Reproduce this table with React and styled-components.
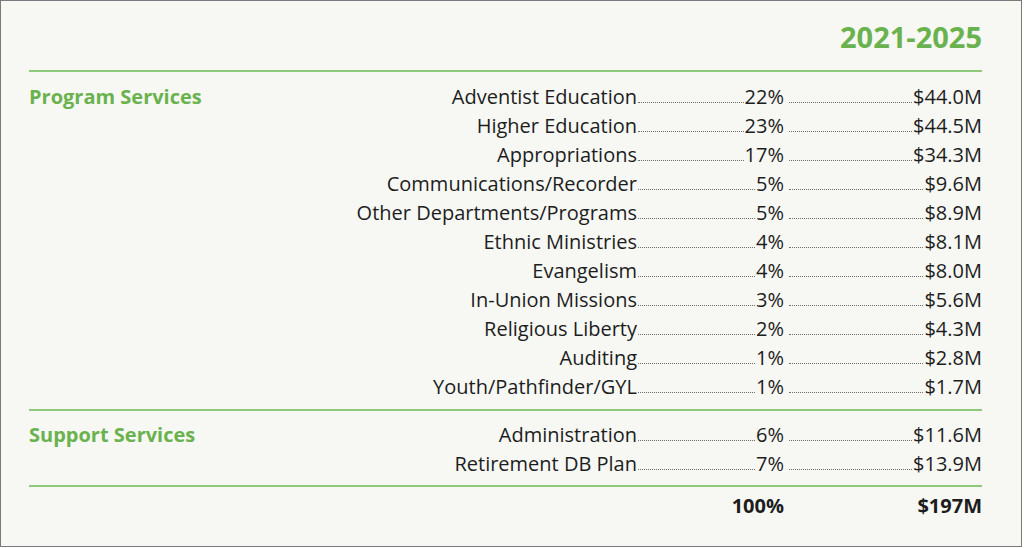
import React from 'react';
import styled, { createGlobalStyle } from 'styled-components';

const GlobalStyle = createGlobalStyle`
    html, body {
        margin: 0;
        padding: 0;
        background: #ffffff;
    }
    body {
        font-family: "Open Sans", "Liberation Sans", sans-serif;
        color: #1d1d1d;
    }
`

const Frame = styled.div`
    box-sizing: border-box;
    width: 1022px;
    height: 547px;
    border: 1px solid #7a7a7a;
    background-color: #f7f8f4;
    padding: 0 39px 0 28px;
`

const Title = styled.h1`
    margin: 0;
    padding-top: 17px;
    height: 71px;
    box-sizing: border-box;
    text-align: right;
    font-size: 29px;
    line-height: 38px;
    font-weight: 700;
    color: #6ab24e;
    border-bottom: 2px solid #8fca7a;
`

const Section = styled.section`
    display: flex;
    padding: ${props => props.$pad};
    border-bottom: ${props => props.$last ? 'none' : '2px solid #8fca7a'};
`

const SectionName = styled.h2`
    margin: 0;
    width: 220px;
    flex-shrink: 0;
    font-size: 20px;
    line-height: 29px;
    font-weight: 700;
    color: #6ab24e;
`

const Rows = styled.div`
    flex: 1;
    display: flex;
    flex-direction: column;
`

const Row = styled.div`
    display: grid;
    grid-template-columns: 1fr 147px 198px;
    font-size: 20px;
    line-height: 29px;
    font-weight: ${props => props.$bold ? 700 : 400};
`

const Label = styled.span`
    text-align: right;
    white-space: nowrap;
`

const Cell = styled.span`
    display: flex;
    align-items: baseline;
    padding-left: ${props => props.$gap || 0}px;
    white-space: nowrap;
`

const Leader = styled.span`
    flex: 1;
    margin: 0 1px 0 1px;
    border-bottom: 1px dotted #6e6e6e;
    transform: translateY(-1px);
    visibility: ${props => props.$hide ? 'hidden' : 'visible'};
`

const program = [
    ['Adventist Education', '22%', '$44.0M'],
    ['Higher Education', '23%', '$44.5M'],
    ['Appropriations', '17%', '$34.3M'],
    ['Communications/Recorder', '5%', '$9.6M'],
    ['Other Departments/Programs', '5%', '$8.9M'],
    ['Ethnic Ministries', '4%', '$8.1M'],
    ['Evangelism', '4%', '$8.0M'],
    ['In-Union Missions', '3%', '$5.6M'],
    ['Religious Liberty', '2%', '$4.3M'],
    ['Auditing', '1%', '$2.8M'],
    ['Youth/Pathfinder/GYL', '1%', '$1.7M'],
]

const support = [
    ['Administration', '6%', '$11.6M'],
    ['Retirement DB Plan', '7%', '$13.9M'],
]

function Line({ label, pct, amt, bold }) {
    return <Row $bold={bold}>
        <Label>{label}</Label>
        <Cell>
            <Leader $hide={bold} />
            {pct}
        </Cell>
        <Cell $gap={4}>
            <Leader $hide={bold} />
            {amt}
        </Cell>
    </Row>
}

export default function App() {
    return <>
        <GlobalStyle />
        <Frame>
            <Title>2021-2025</Title>
            <Section $pad='10px 0 8px'>
                <SectionName>Program Services</SectionName>
                <Rows>
                    {program.map(r => <Line key={r[0]} label={r[0]} pct={r[1]} amt={r[2]} />)}
                </Rows>
            </Section>
            <Section $pad='9px 0 7px'>
                <SectionName>Support Services</SectionName>
                <Rows>
                    {support.map(r => <Line key={r[0]} label={r[0]} pct={r[1]} amt={r[2]} />)}
                </Rows>
            </Section>
            <Section $pad='4px 0 0' $last>
                <SectionName />
                <Rows>
                    <Line label='' pct='100%' amt='$197M' bold />
                </Rows>
            </Section>
        </Frame>
    </>
}
